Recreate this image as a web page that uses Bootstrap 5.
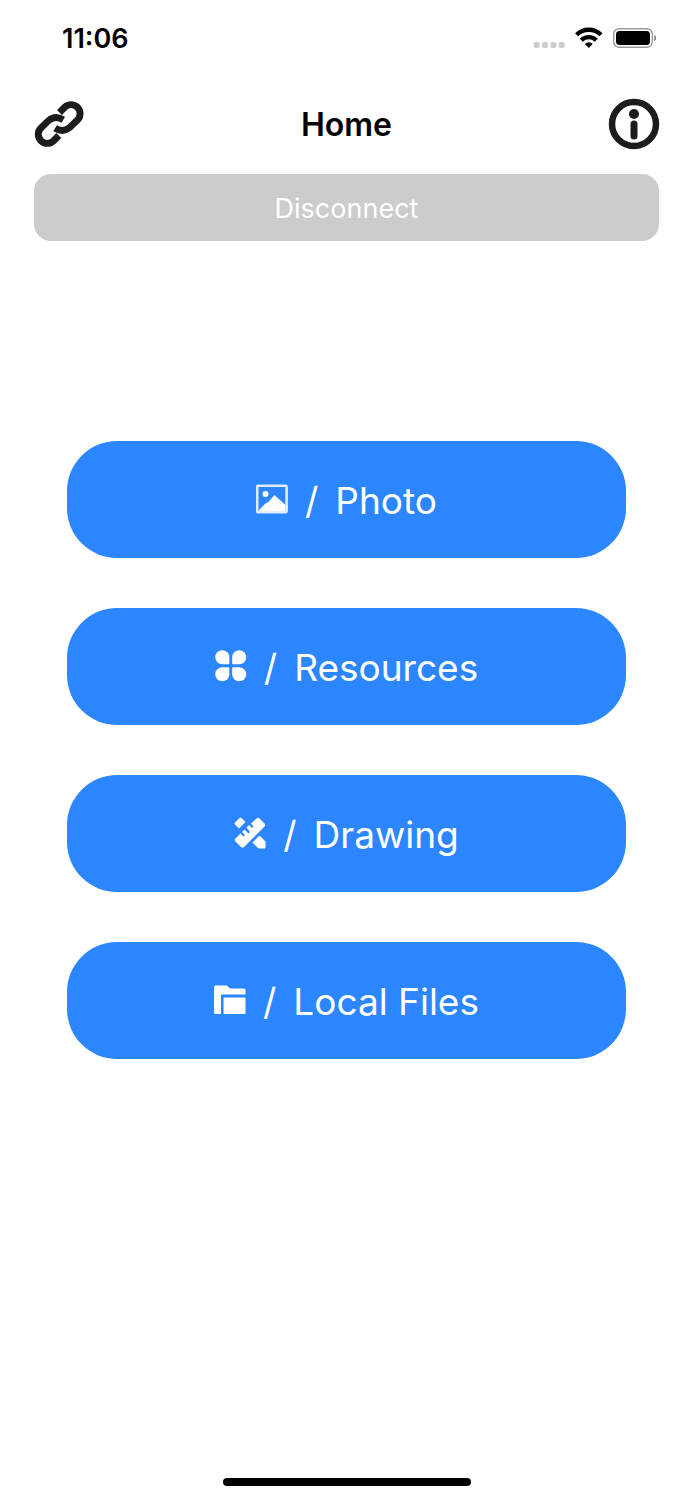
<!DOCTYPE html>
<html lang="en">
<head>
<meta charset="utf-8">
<meta name="viewport" content="width=device-width, initial-scale=1">
<title>Home</title>
<link href="https://cdn.jsdelivr.net/npm/bootstrap@5.3.0/dist/css/bootstrap.min.css" rel="stylesheet">
<style>
  body { font-family: Inter, "Liberation Sans", sans-serif; color: #000; background: #fff; }
  .status { height: 76px; padding: 0 37px 0 62px; }
  .clock { font-size: 27px; line-height: 32px; font-weight: 600; padding-top: 2px; }
  .top-bar { height: 98px; padding: 0 33px 2px; }
  .top-bar h1 { font-size: 32px; line-height: 40px; font-weight: 600; padding-top: 2px; }
  .icon-btn { width: 52px; height: 52px; line-height: 0; }
  .edge { padding: 0 34px; }
  .btn-disconnect, .btn-disconnect:disabled { height: 67px; border: 0; border-radius: 17px; background: #ccc; color: #fff; opacity: 1; font-size: 27px; line-height: 36px; padding: 2px 0 0; }
  .menu { padding: 200px 67px 0; gap: 50px; }
  .btn-menu, .btn-menu:hover, .btn-menu:active { height: 117px; border: 0; border-radius: 50px; background: #2b86ff; color: #fff; font-size: 37px; line-height: 48px; gap: 17px; }
  .btn-menu svg { margin-bottom: 2px; }
  .btn-menu span { padding-top: 2px; }
  .home-bar { width: 248px; height: 8px; border-radius: 4px; background: #000; margin-bottom: 14px; }
</style>
</head>
<body>
<div class="d-flex flex-column min-vh-100">
  <div class="status d-flex align-items-center justify-content-between">
    <span class="clock">11:06</span>
    <svg width="124" height="24" viewBox="0 0 124 24" aria-hidden="true">
      <g fill="#ccc"><rect x="1.700" y="16" width="6" height="6" rx="2"/><rect x="10" y="16" width="6" height="6" rx="2"/><rect x="18.400" y="16" width="6" height="6" rx="2"/><rect x="26.700" y="16" width="6" height="6" rx="2"/></g>
      <g fill="none" stroke="#000" stroke-width="4.300"><path d="M44.600 8.800a17.300 17.300 0 0 1 24.400 0"/><path d="M49.300 14.200a10.600 10.600 0 0 1 15 0"/></g>
      <path d="M52.900 18q3.900-3.600 7.800 0L56.800 22z"/>
      <rect x="81.700" y="2.700" width="38.600" height="18.600" rx="5.500" fill="none" stroke="#999" stroke-width="1.400"/>
      <rect x="84" y="5" width="34" height="14" rx="3.500"/>
      <path d="M122.200 8.700q2 1 2 3.300t-2 3.300z" fill="#888"/>
    </svg>
  </div>
  <header class="top-bar d-flex align-items-center justify-content-between">
    <button type="button" class="btn icon-btn p-0 border-0" aria-label="Connect">
      <svg width="52" height="52" viewBox="101 296 151 151" fill="none" stroke="#1c1c1c" stroke-width="20"><path d="M178 338L193 323A26 26 0 0 1 230 360L207 382Q188 397 165 384"/><path d="M176 405L161 420A26 26 0 0 1 124 383L147 361Q166 346 189 359"/></svg>
    </button>
    <h1 class="m-0">Home</h1>
    <button type="button" class="btn icon-btn p-0 border-0" aria-label="Information">
      <svg width="52" height="52" viewBox="0 0 52 52" fill="#1c1c1c"><circle cx="26" cy="26" r="22" fill="none" stroke="#1c1c1c" stroke-width="6.500"/><circle cx="26" cy="16" r="5"/><rect x="22.500" y="22.500" width="7" height="19" rx="3.500"/></svg>
    </button>
  </header>
  <div class="edge">
    <button type="button" class="btn btn-disconnect w-100" disabled>Disconnect</button>
  </div>
  <main class="menu d-flex flex-column">
    <button type="button" class="btn btn-menu d-flex align-items-center justify-content-center p-0">
      <svg width="32" height="32" viewBox="0 0 32 32" fill="#fff" aria-hidden="true"><rect x="1.200" y="2.700" width="29.400" height="26.600" rx="1" fill="none" stroke="#fff" stroke-opacity=".85" stroke-width="2.600"/><circle cx="9.500" cy="11" r="3"/><path d="M3 27L9.500 20.500L12.500 19L18.300 12L29.500 22V28H3z"/></svg>
      <span>/</span><span>Photo</span>
    </button>
    <button type="button" class="btn btn-menu d-flex align-items-center justify-content-center p-0">
      <svg width="32" height="32" viewBox="0 0 32 32" fill="#fff" aria-hidden="true"><path id="petal" d="M7.300.300A7 7 0 0 1 14.300 7.300V13Q14.300 14.300 13 14.300H7.300A7 7 0 0 1 7.300.300z"/><use href="#petal" transform="matrix(-1 0 0 1 31.500 0)"/><use href="#petal" transform="matrix(1 0 0 -1 0 31.500)"/><use href="#petal" transform="matrix(-1 0 0 -1 31.500 31.500)"/></svg>
      <span>/</span><span>Resources</span>
    </button>
    <button type="button" class="btn btn-menu d-flex align-items-center justify-content-center p-0">
      <svg width="32" height="32" viewBox="0 0 32 32" fill="#fff" aria-hidden="true"><path d="M5 1.500Q6.500.200 8 1.500L11.500 5L5 11.500L1 7.500Q0 6.500 1 5.500z"/><path d="M22.500 1.500Q24 0 25.500 1.500L30.500 6.500Q32 8 30.500 9.500L10 30Q8.500 31.500 7 30L1.500 24.500Q0 23 1.500 21.500L6.500 16.500L9.500 19.500L11 18L8 15L10.500 12.500L14.500 16.500L16 15L12.500 10.500L15 8L18 11L19.500 9.500L17 6.500z"/><path d="M25.500 19L31 24.500V31H24.500L19 25.500z" stroke="#fff" stroke-linejoin="round"/></svg>
      <span>/</span><span>Drawing</span>
    </button>
    <button type="button" class="btn btn-menu d-flex align-items-center justify-content-center p-0">
      <svg width="32" height="32" viewBox="0 0 32 32" fill="#fff" aria-hidden="true"><path d="M1.500 1.500H13L16 4.500H30Q31.500 4.500 31.500 6V10.500H7V30H1.500Q0 30 0 28.500V3Q0 1.500 1.500 1.500z"/><rect x="9.500" y="13.500" width="22" height="16.500" rx="1"/></svg>
      <span>/</span><span>Local Files</span>
    </button>
  </main>
  <div class="home-bar mt-auto mx-auto"></div>
</div>
<script src="https://cdn.jsdelivr.net/npm/bootstrap@5.3.0/dist/js/bootstrap.bundle.min.js"></script>
</body>
</html>
